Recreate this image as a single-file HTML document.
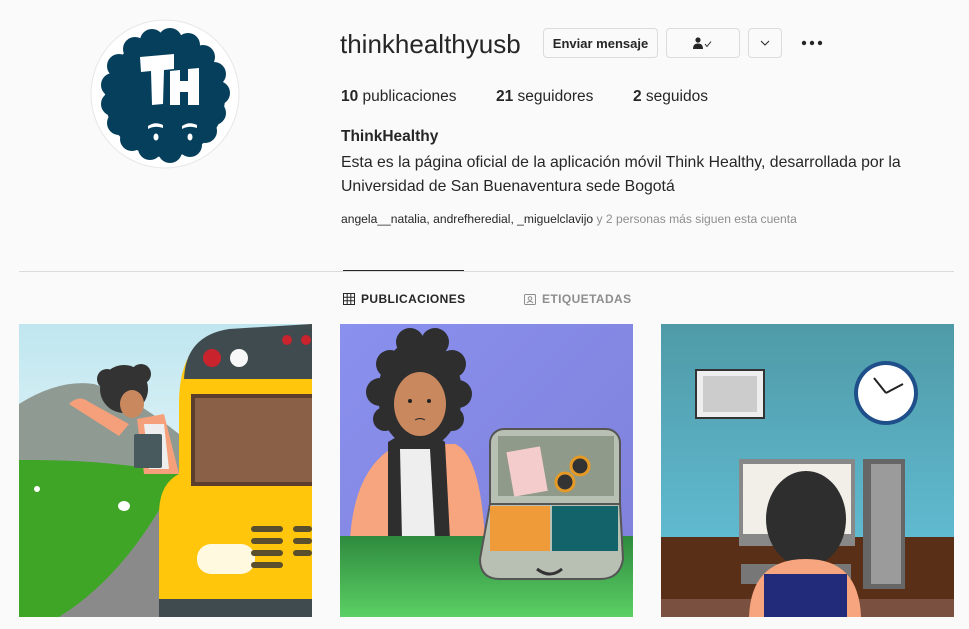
<!DOCTYPE html>
<html><head><meta charset="utf-8"><style>
*{margin:0;padding:0;box-sizing:border-box}
body{width:969px;height:629px;background:#fafafa;font-family:"Liberation Sans",sans-serif;color:#262626;position:relative;overflow:hidden}
.a{position:absolute}
.btn{position:absolute;border:1px solid #dbdbdb;border-radius:4px;background:#fafafa;height:30px;font-size:13px;font-weight:bold;display:flex;align-items:center;justify-content:center}
</style></head><body>
<svg class="a" style="left:90px;top:19px" width="150" height="150" viewBox="0 0 150 150">
<circle cx="75" cy="75" r="74" fill="#fff" stroke="#e6e6e6"/>
<g fill="#053f5c">
<circle cx="75" cy="78" r="60"/>
<circle cx="45" cy="30" r="12"/><circle cx="62" cy="22" r="12"/><circle cx="80" cy="21" r="12"/><circle cx="98" cy="26" r="12"/><circle cx="113" cy="38" r="12"/><circle cx="124" cy="55" r="12"/><circle cx="128" cy="74" r="12"/><circle cx="124" cy="94" r="12"/><circle cx="115" cy="112" r="12"/><circle cx="100" cy="126" r="12"/><circle cx="80" cy="132" r="12"/><circle cx="60" cy="129" r="12"/><circle cx="42" cy="120" r="12"/><circle cx="29" cy="104" r="12"/><circle cx="23" cy="85" r="12"/><circle cx="23" cy="66" r="12"/><circle cx="29" cy="47" r="12"/>
</g>
<path d="M50 38 L84 35 L84 50 L74 51 L73 85 L62 86 L61 52 L51 53Z" fill="#fff"/>
<path d="M80 52 L90 51 L90 62 L98 62 L98 50 L109 49 L109 86 L98 86 L98 73 L90 73 L90 86 L80 86Z" fill="#fff"/>
<path d="M58 107 Q65 102 73 106 L73 109 Q65 106 58 110Z M92 107 Q99 102 107 106 L107 109 Q99 106 92 110Z" fill="#fff"/>
<ellipse cx="66" cy="118" rx="2.5" ry="3.5" fill="#fff"/><ellipse cx="100" cy="118" rx="2.5" ry="3.5" fill="#fff"/>
</svg>
<div class="a" style="left:340px;top:29px;font-size:26px;color:#262626">thinkhealthyusb</div>
<div class="btn" style="left:543px;top:28px;width:115px">Enviar mensaje</div>
<div class="btn" style="left:666px;top:28px;width:74px"><svg width="22" height="12" viewBox="0 0 22 12"><circle cx="6" cy="3" r="2.6" fill="#262626"/><path d="M1 12 Q1 6.5 6 6.5 Q11 6.5 11 12Z" fill="#262626"/><path d="M13 7 L15 9.5 L19 4.5" stroke="#262626" fill="none" stroke-width="1"/></svg></div>
<div class="btn" style="left:748px;top:28px;width:34px"><svg width="10" height="6"><path d="M1 1 L5 5 L9 1" stroke="#262626" fill="none"/></svg></div>
<svg class="a" style="left:801px;top:40px" width="22" height="6"><circle cx="3" cy="3" r="2.2" fill="#262626"/><circle cx="11" cy="3" r="2.2" fill="#262626"/><circle cx="19" cy="3" r="2.2" fill="#262626"/></svg>
<div class="a" style="left:341px;top:88px;font-size:15.5px"><b style="font-weight:600">10</b> publicaciones</div>
<div class="a" style="left:496px;top:88px;font-size:15.5px"><b style="font-weight:600">21</b> seguidores</div>
<div class="a" style="left:633px;top:88px;font-size:15.5px"><b style="font-weight:600">2</b> seguidos</div>
<div class="a" style="left:341px;top:128px;font-size:15.5px;font-weight:bold">ThinkHealthy</div>
<div class="a" style="left:341px;top:151px;font-size:15.8px;line-height:24px;width:590px">Esta es la página oficial de la aplicación móvil Think Healthy, desarrollada por la Universidad de San Buenaventura sede Bogotá</div>
<div class="a" style="left:341px;top:212px;font-size:12.1px;color:#262626">angela__natalia, andrefheredial, _miguelclavijo <span style="color:#8e8e8e">y 2 personas más siguen esta cuenta</span></div>
<div class="a" style="left:19px;top:271px;width:935px;height:1px;background:#dbdbdb"></div>
<div class="a" style="left:343px;top:270px;width:121px;height:1px;background:#262626"></div>
<div class="a" style="left:343px;top:292px;font-size:12px;font-weight:bold;letter-spacing:0.4px;display:flex;align-items:center;gap:6px"><svg width="12" height="12"><path d="M.5 .5h11v11H.5z M4.2 .5v11 M7.8 .5v11 M.5 4.2h11 M.5 7.8h11" stroke="#262626" fill="none"/></svg>PUBLICACIONES</div>
<div class="a" style="left:524px;top:292px;font-size:12px;font-weight:bold;letter-spacing:0.4px;color:#8e8e8e;display:flex;align-items:center;gap:6px"><svg width="12" height="12"><rect x=".5" y="1.5" width="11" height="10" rx="1" stroke="#8e8e8e" fill="none"/><circle cx="6" cy="5.5" r="1.8" stroke="#8e8e8e" fill="none"/><path d="M3 10 Q6 6.5 9 10" stroke="#8e8e8e" fill="none"/></svg>ETIQUETADAS</div>

<svg class="a" style="left:19px;top:324px" width="293" height="293" viewBox="0 0 293 293">
<defs><linearGradient id="sky" x1="0" y1="0" x2="0" y2="1"><stop offset="0" stop-color="#bfe6ef"/><stop offset="1" stop-color="#fff"/></linearGradient></defs>
<rect width="293" height="293" fill="url(#sky)"/>
<path d="M0 80 Q40 55 75 60 Q110 70 160 110 L160 293 L0 293Z" fill="#8f9a93"/>
<path d="M0 136 Q90 135 160 150 Q110 250 40 293 L0 293Z" fill="#3ea526"/>
<path d="M160 150 Q110 250 40 293 L160 293Z" fill="#8a8a8a"/>
<ellipse cx="105" cy="182" rx="6" ry="5" fill="#fff"/><circle cx="18" cy="165" r="3" fill="#fff"/>
<circle cx="105" cy="65" r="24" fill="#333"/><circle cx="88" cy="55" r="10" fill="#333"/><circle cx="122" cy="50" r="10" fill="#333"/>
<ellipse cx="113" cy="80" rx="12" ry="14" fill="#c9885e"/>
<path d="M50 80 Q60 70 70 78 L110 100 L100 112Z" fill="#f5a07a"/>
<path d="M118 95 L145 90 L160 150 L125 150Z" fill="#f5a07a"/><path d="M125 100 L145 100 L150 145 L130 145Z" fill="#eee"/>
<rect x="115" y="110" width="28" height="34" rx="2" fill="#485a5e"/>
<path d="M160 293 L140 293 L140 190 Q140 160 160 150 L160 80 Q160 20 200 8 L293 0 L293 293Z" fill="#ffc60b"/>
<path d="M165 58 Q165 12 210 5 L293 0 L293 55 L165 55Z" fill="#3f4b4f"/>
<circle cx="193" cy="34" r="9" fill="#c9232e"/><circle cx="220" cy="34" r="9" fill="#f8f8f8"/><circle cx="268" cy="16" r="5" fill="#c9232e"/><circle cx="287" cy="16" r="5" fill="#c9232e"/>
<rect x="172" y="70" width="121" height="92" fill="#5b3e2e"/><rect x="176" y="74" width="117" height="84" fill="#8a6146"/>
<rect x="178" y="220" width="58" height="30" rx="14" fill="#fff9e0"/>
<g fill="#5a4f2d"><rect x="232" y="202" width="32" height="6" rx="3"/><rect x="232" y="214" width="32" height="6" rx="3"/><rect x="232" y="226" width="32" height="6" rx="3"/><rect x="232" y="238" width="32" height="6" rx="3"/><rect x="274" y="202" width="19" height="6" rx="3"/><rect x="274" y="214" width="19" height="6" rx="3"/><rect x="274" y="226" width="19" height="6" rx="3"/></g>
<rect x="140" y="275" width="153" height="18" fill="#3f4b4f"/>
</svg>

<svg class="a" style="left:340px;top:324px" width="293" height="293" viewBox="0 0 293 293">
<defs><linearGradient id="pu" x1="0" y1="0" x2="1" y2="1"><stop offset="0" stop-color="#8990ee"/><stop offset="1" stop-color="#7f80d8"/></linearGradient><linearGradient id="gr" x1="0" y1="0" x2="0" y2="1"><stop offset="0" stop-color="#2e8a3e"/><stop offset="1" stop-color="#5bd064"/></linearGradient></defs>
<rect width="293" height="293" fill="url(#pu)"/>
<path d="M10 215 Q15 140 60 120 L115 120 Q140 130 145 215Z" fill="#f7a57e"/>
<path d="M48 118 L70 105 L85 105 L105 118 L110 215 L48 215Z" fill="#2e2e2e"/>
<path d="M60 125 L90 125 L95 215 L62 215Z" fill="#eee"/>
<rect x="66" y="90" width="22" height="25" fill="#c9885e"/>
<ellipse cx="80" cy="70" rx="42" ry="55" fill="#2e2e2e"/>
<g fill="#2e2e2e"><circle cx="50" cy="40" r="14"/><circle cx="70" cy="18" r="14"/><circle cx="95" cy="18" r="14"/><circle cx="112" cy="40" r="14"/><circle cx="118" cy="70" r="14"/><circle cx="112" cy="95" r="12"/><circle cx="45" cy="95" r="12"/><circle cx="40" cy="68" r="14"/></g>
<ellipse cx="80" cy="80" rx="26" ry="32" fill="#c9885e"/>
<circle cx="70" cy="77" r="2" fill="#222"/><circle cx="89" cy="77" r="2" fill="#222"/><path d="M75 96 Q80 93 85 96" stroke="#222" fill="none"/>
<rect y="212" width="293" height="81" fill="url(#gr)"/>
<rect x="150" y="105" width="130" height="125" rx="14" fill="#b7c0b2" stroke="#555" stroke-width="2"/>
<rect x="158" y="112" width="116" height="60" fill="#8f9a8a"/>
<rect x="170" y="125" width="34" height="45" fill="#f5cccc" transform="rotate(-10 187 147)"/>
<circle cx="240" cy="142" r="9" fill="#333" stroke="#e69a26" stroke-width="3"/><circle cx="225" cy="158" r="9" fill="#333" stroke="#e69a26" stroke-width="3"/>
<path d="M140 235 L150 180 L280 180 L283 235 Q280 255 260 255 L160 255 Q140 255 140 235Z" fill="#b7c0b2" stroke="#555" stroke-width="2"/>
<rect x="150" y="182" width="60" height="45" fill="#f09b3a"/><rect x="212" y="182" width="66" height="45" fill="#12636a"/>
<path d="M197 245 Q210 255 222 245" stroke="#333" stroke-width="3" fill="none"/>
</svg>

<svg class="a" style="left:661px;top:324px" width="293" height="293" viewBox="0 0 293 293">
<defs><linearGradient id="wl" x1="0" y1="0" x2="0" y2="1"><stop offset="0" stop-color="#4f9aa7"/><stop offset="1" stop-color="#66c6df"/></linearGradient></defs>
<rect width="293" height="293" fill="url(#wl)"/>
<rect x="35" y="46" width="68" height="48" fill="#eee" stroke="#333" stroke-width="2"/><rect x="42" y="52" width="54" height="36" fill="#ccc"/>
<circle cx="225" cy="69" r="32" fill="#1f4f8a"/><circle cx="225" cy="69" r="28" fill="#fff"/><path d="M225 69 L213 54 M225 69 L242 60" stroke="#222" stroke-width="2"/>
<rect y="213" width="293" height="80" fill="#5a2f18"/><rect y="275" width="293" height="18" fill="#7a5040"/>
<rect x="78" y="135" width="116" height="87" fill="#888"/><rect x="82" y="140" width="108" height="70" fill="#f2eee8"/>
<rect x="202" y="135" width="42" height="130" fill="#666"/><rect x="210" y="140" width="30" height="120" fill="#9b9b9b"/>
<rect x="80" y="240" width="110" height="20" fill="#777"/>
<ellipse cx="145" cy="195" rx="40" ry="48" fill="#2e2e2e"/>
<path d="M88 293 Q90 235 145 235 Q198 235 200 293Z" fill="#f7a57e"/>
<rect x="103" y="250" width="83" height="43" fill="#222a7a"/>
</svg>
</body></html>
